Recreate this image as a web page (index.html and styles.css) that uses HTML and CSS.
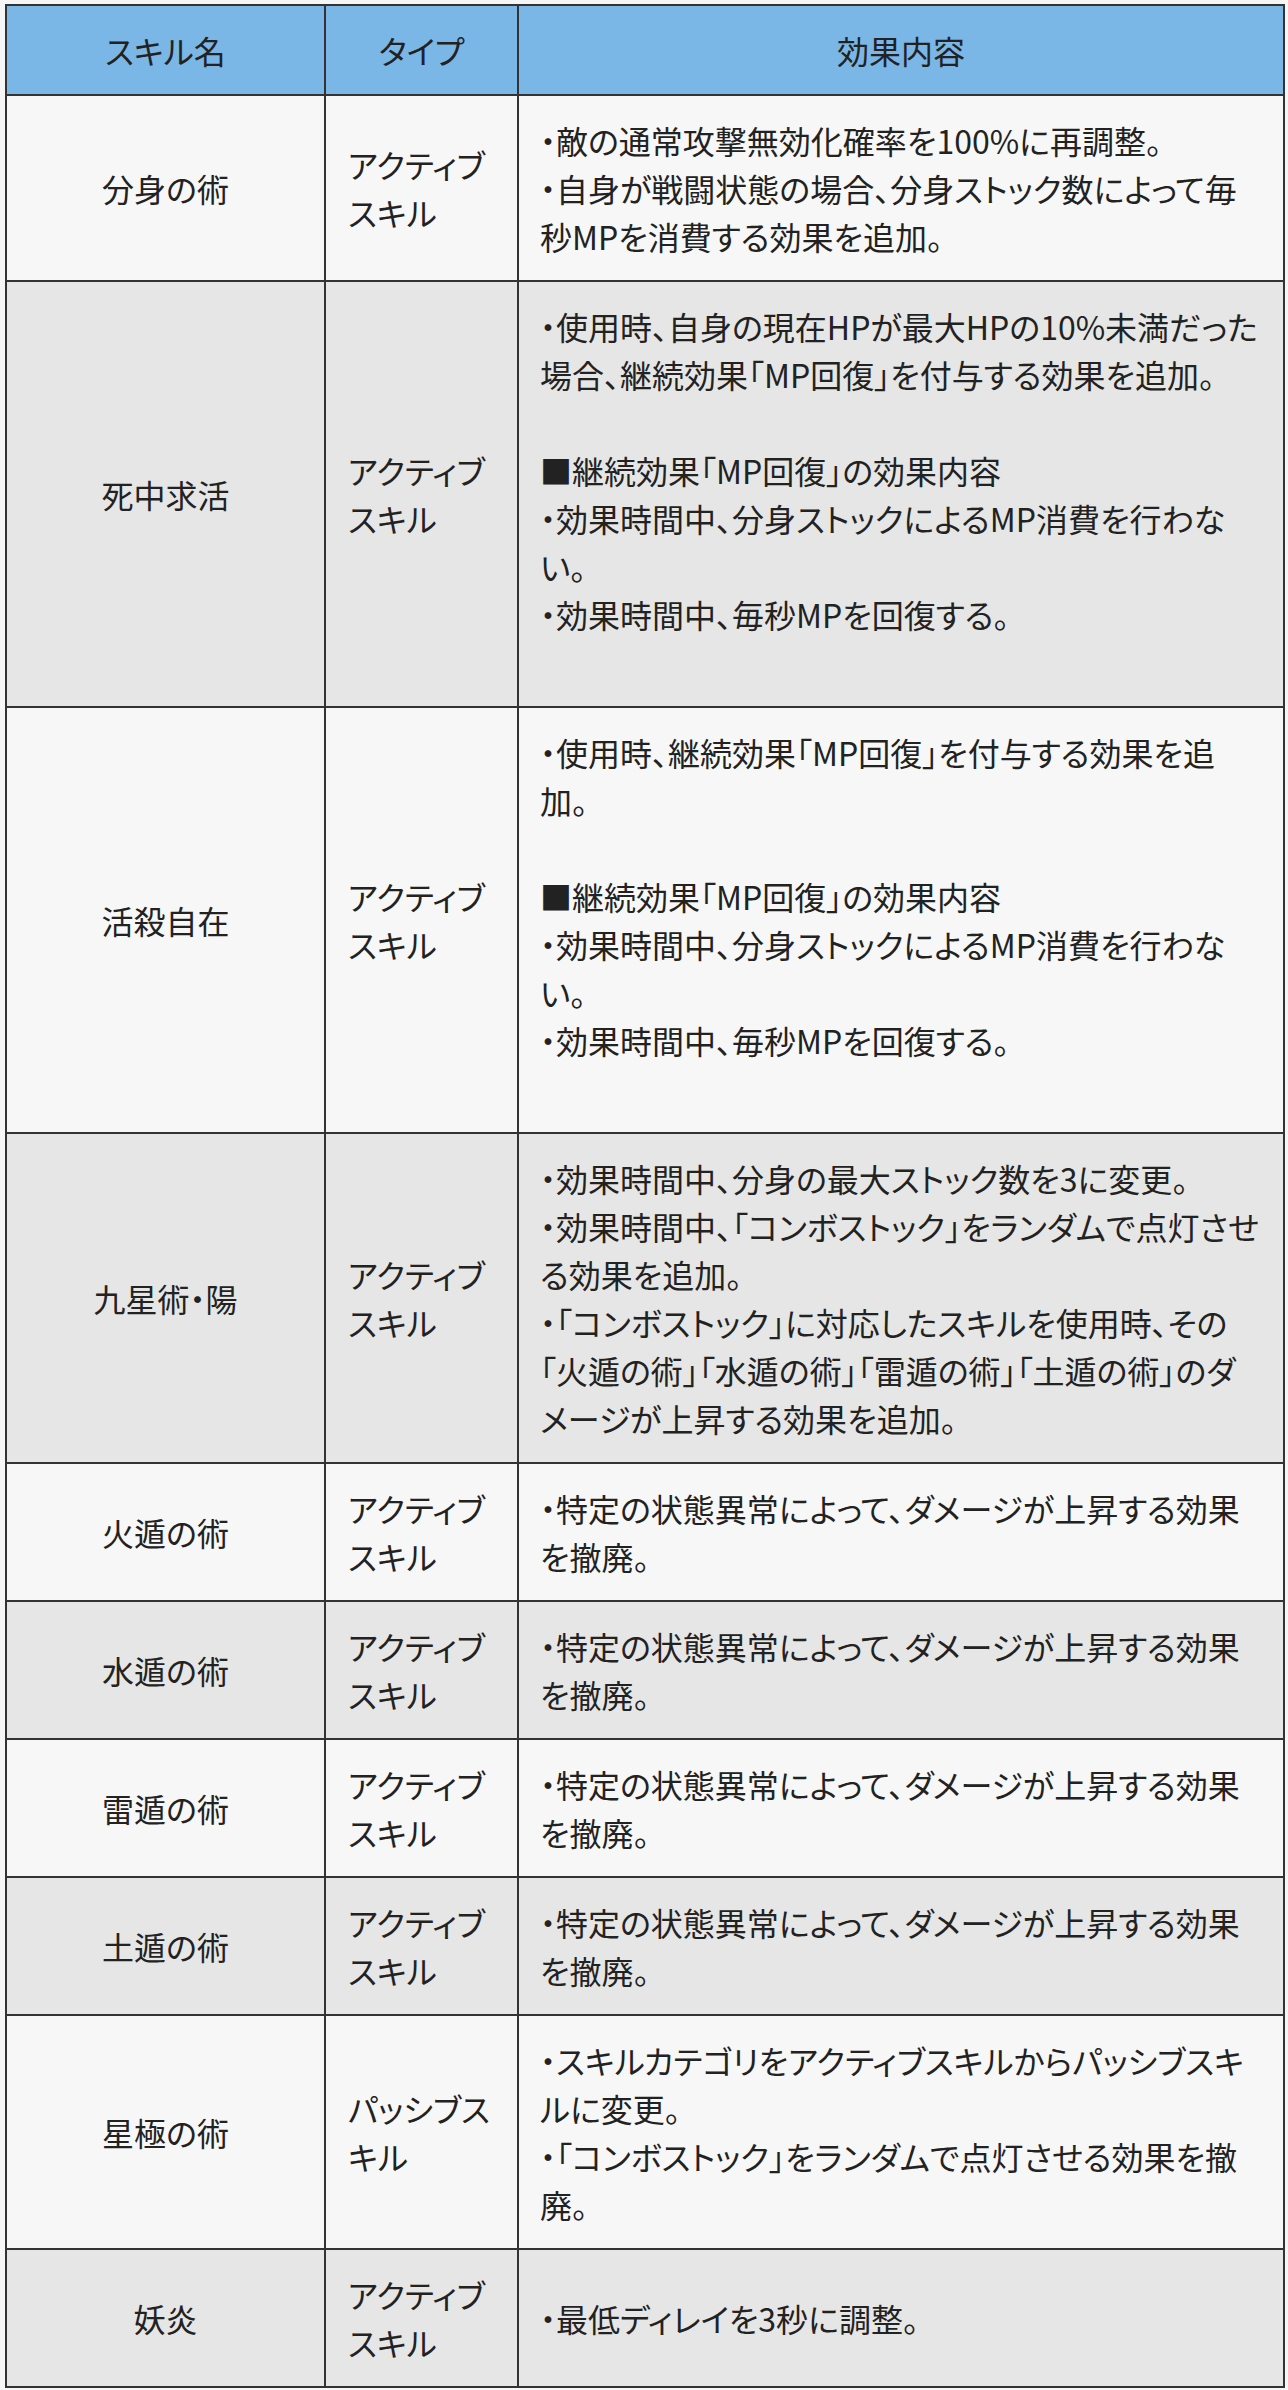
FILE: index.html
```html
<!DOCTYPE html>
<html lang="ja">
<head>
<meta charset="utf-8">
<title>スキル調整一覧</title>
<link rel="stylesheet" href="styles.css">
</head>
<body>
<table class="skills">
  <colgroup>
    <col class="c-name">
    <col class="c-type">
    <col class="c-desc">
  </colgroup>
  <thead>
    <tr>
      <th>スキル名</th>
      <th>タイプ</th>
      <th>効果内容</th>
    </tr>
  </thead>
  <tbody>
    <tr>
      <td class="name">分身の術</td>
      <td class="type">アクティブ<br>スキル</td>
      <td class="desc">・敵の通常攻撃無効化確率を100%に再調整。<br>・自身が戦闘状態の場合、分身ストック数によって毎<br>秒MPを消費する効果を追加。</td>
    </tr>
    <tr>
      <td class="name">死中求活</td>
      <td class="type">アクティブ<br>スキル</td>
      <td class="desc">・使用時、自身の現在HPが最大HPの10%未満だった<br>場合、継続効果「MP回復」を付与する効果を追加。<br><br>■継続効果「MP回復」の効果内容<br>・効果時間中、分身ストックによるMP消費を行わな<br>い。<br>・効果時間中、毎秒MPを回復する。<br><br></td>
    </tr>
    <tr>
      <td class="name">活殺自在</td>
      <td class="type">アクティブ<br>スキル</td>
      <td class="desc">・使用時、継続効果「MP回復」を付与する効果を追<br>加。<br><br>■継続効果「MP回復」の効果内容<br>・効果時間中、分身ストックによるMP消費を行わな<br>い。<br>・効果時間中、毎秒MPを回復する。<br><br></td>
    </tr>
    <tr>
      <td class="name">九星術・陽</td>
      <td class="type">アクティブ<br>スキル</td>
      <td class="desc">・効果時間中、分身の最大ストック数を3に変更。<br>・効果時間中、「コンボストック」をランダムで点灯させ<br>る効果を追加。<br>・「コンボストック」に対応したスキルを使用時、その<br>「火遁の術」「水遁の術」「雷遁の術」「土遁の術」のダ<br>メージが上昇する効果を追加。</td>
    </tr>
    <tr>
      <td class="name">火遁の術</td>
      <td class="type">アクティブ<br>スキル</td>
      <td class="desc">・特定の状態異常によって、ダメージが上昇する効果<br>を撤廃。</td>
    </tr>
    <tr>
      <td class="name">水遁の術</td>
      <td class="type">アクティブ<br>スキル</td>
      <td class="desc">・特定の状態異常によって、ダメージが上昇する効果<br>を撤廃。</td>
    </tr>
    <tr>
      <td class="name">雷遁の術</td>
      <td class="type">アクティブ<br>スキル</td>
      <td class="desc">・特定の状態異常によって、ダメージが上昇する効果<br>を撤廃。</td>
    </tr>
    <tr>
      <td class="name">土遁の術</td>
      <td class="type">アクティブ<br>スキル</td>
      <td class="desc">・特定の状態異常によって、ダメージが上昇する効果<br>を撤廃。</td>
    </tr>
    <tr>
      <td class="name">星極の術</td>
      <td class="type">パッシブス<br>キル</td>
      <td class="desc">・スキルカテゴリをアクティブスキルからパッシブスキ<br>ルに変更。<br>・「コンボストック」をランダムで点灯させる効果を撤<br>廃。</td>
    </tr>
    <tr>
      <td class="name">妖炎</td>
      <td class="type">アクティブ<br>スキル</td>
      <td class="desc">・最低ディレイを3秒に調整。</td>
    </tr>
  </tbody>
</table>
</body>
</html>
```

FILE: styles.css
```css
html {
  background: #f6f6f6;
}

body {
  margin: 0;
  padding: 4px 0 0 5px;
  background: #f6f6f6;
  color: #222222;
  font-family: "Noto Sans CJK JP", "Noto Sans", sans-serif;
  font-size: 32px;
  font-weight: 400;
  line-height: 48px;
  font-feature-settings: "palt";
}

.skills {
  width: 1278px;
  border-collapse: collapse;
  table-layout: fixed;
}

.c-name { width: 319px; }
.c-type { width: 193px; }
.c-desc { width: 766px; }

.skills th,
.skills td {
  border: 2px solid #333333;
  padding: 20px 20px;
  vertical-align: middle;
}

.skills th {
  background: #7ab6e6;
  font-weight: 400;
  text-align: center;
}

.skills tbody tr:nth-child(odd) td {
  background: #f7f7f7;
}

.skills tbody tr:nth-child(even) td {
  background: #e6e6e6;
}

.skills td.name {
  text-align: center;
}

.skills td.type {
  text-align: left;
  padding-left: 22px;
  padding-right: 6px;
  white-space: nowrap;
}

.skills td.desc {
  text-align: left;
  white-space: nowrap;
  padding-left: 21px;
  padding-right: 6px;
}
```
